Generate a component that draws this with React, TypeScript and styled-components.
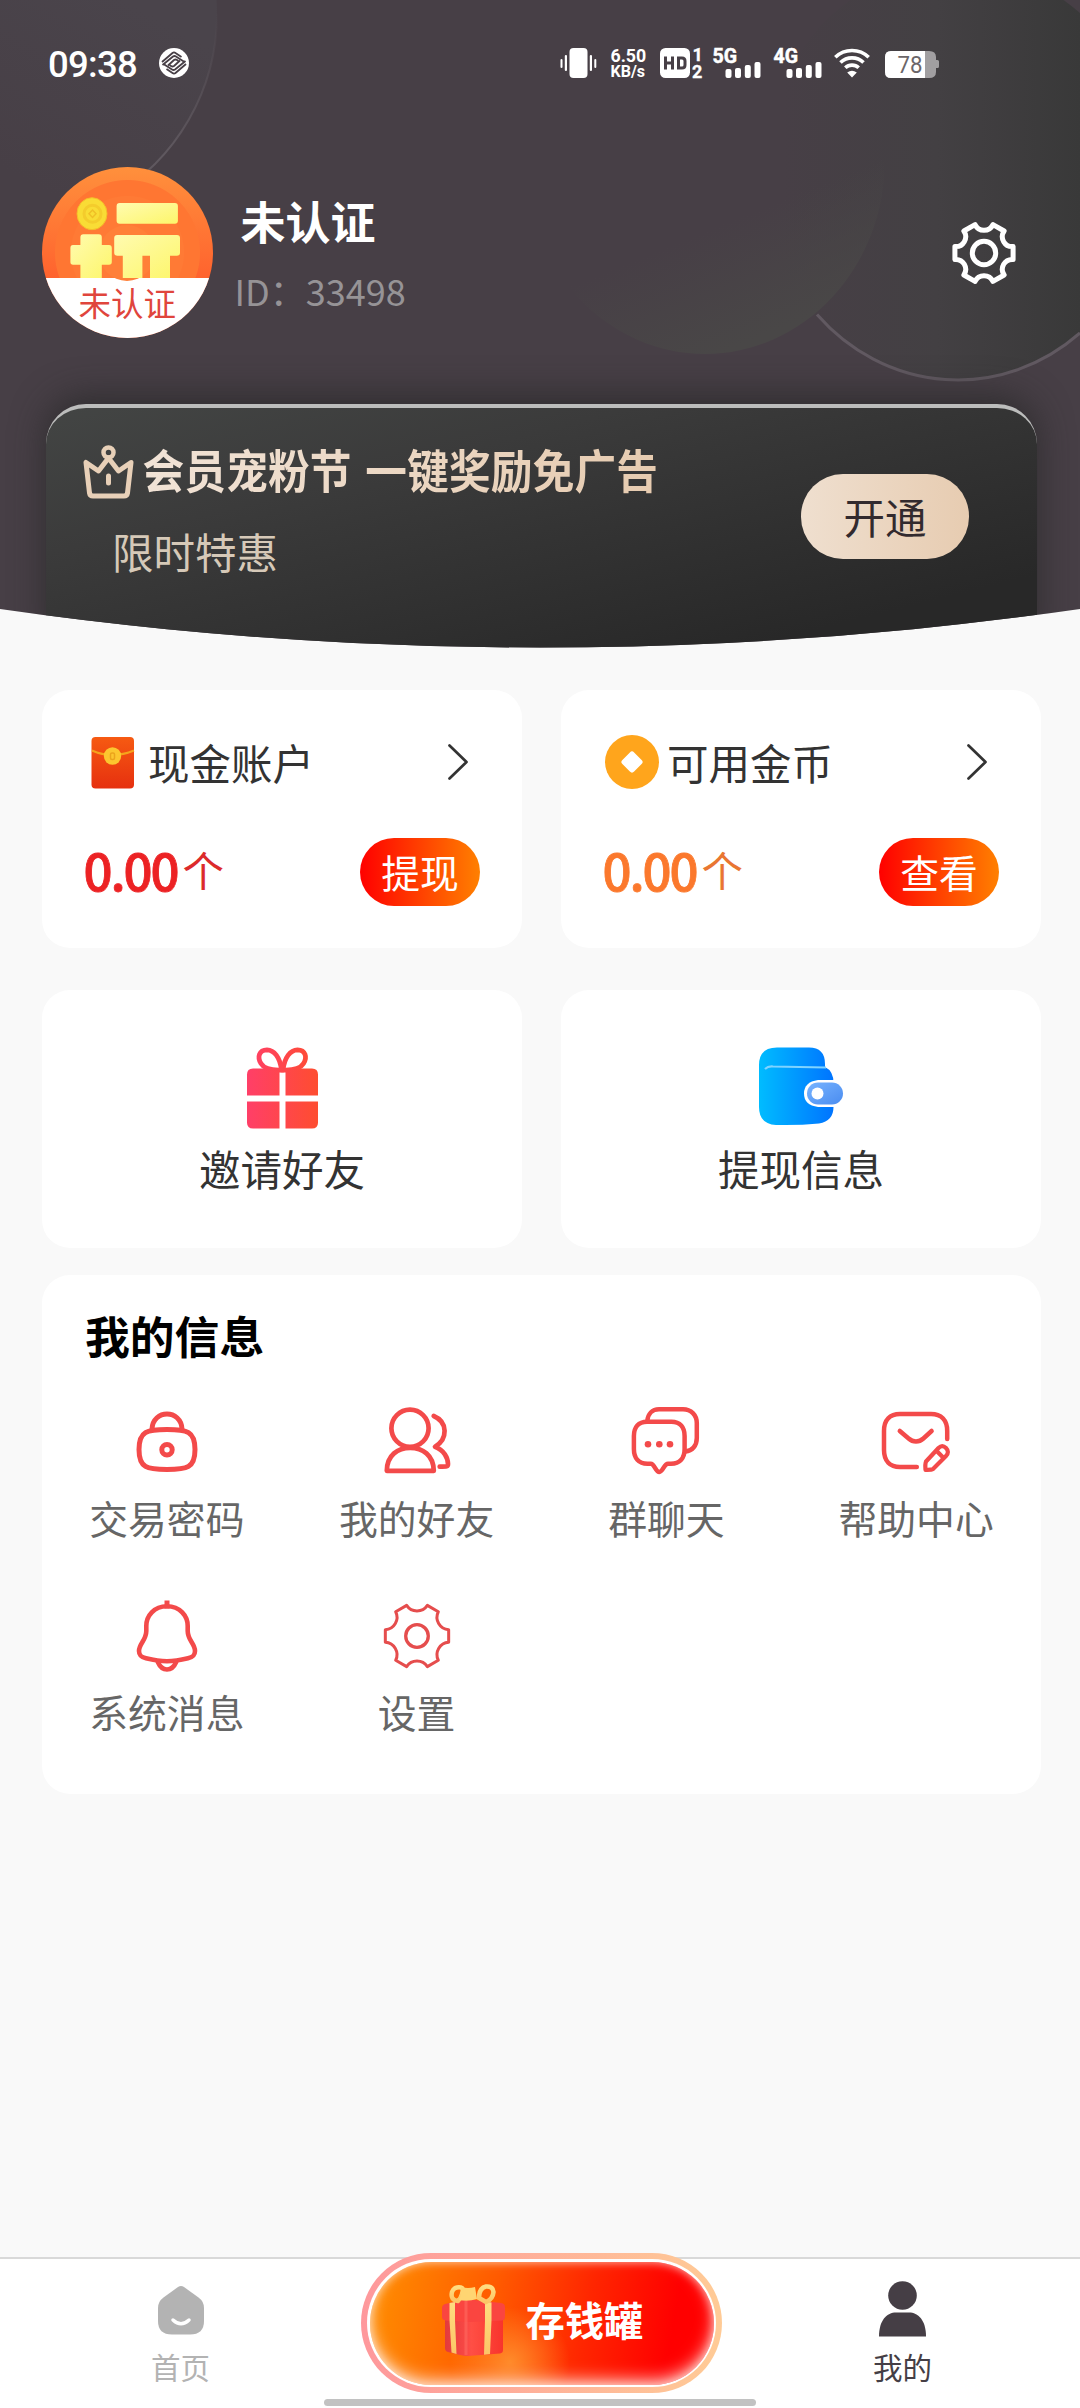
import React from "react";
import styled, { createGlobalStyle, css } from "styled-components";

const CJK = `"Noto Sans CJK SC", "Noto Sans", sans-serif`;
const RED = "#f34a4a";

const GlobalStyle = createGlobalStyle`
  * { box-sizing: border-box; }
  html, body { margin: 0; padding: 0; background: #f9f9f9; }
  body { font-family: ${CJK}; overflow-x: hidden; }
  svg { display: block; flex: none; overflow: visible; }
`;

/* Six-toothed gear outline: straight tooth tips joined by concave valleys. */
function gearPath(c: number, radius: number, halfTooth: number, valley: number) {
  const pt = (deg: number) => {
    const a = (deg * Math.PI) / 180;
    return `${(c + radius * Math.cos(a)).toFixed(2)} ${(c + radius * Math.sin(a)).toFixed(2)}`;
  };
  let d = `M${pt(-halfTooth)}`;
  for (let i = 0; i < 6; i++) {
    const t = i * 60;
    d += ` L${pt(t + halfTooth)} A${valley} ${valley} 0 0 0 ${pt(t + 60 - halfTooth)}`;
  }
  return d + "Z";
}

/* ---------- layout ---------- */

const Screen = styled.div`
  width: 1080px;
  height: 2408px;
  display: flex;
  flex-direction: column;
  background: #f9f9f9;
  overflow: hidden;
`;

const Hero = styled.header`
  position: relative;
  height: 648px;
  flex: none;
  display: flex;
  flex-direction: column;
  background: #473f46;
  clip-path: circle(3806px at 540px -3158.5px);
`;

const HeroArt = styled.svg`
  position: absolute;
  left: 0;
  top: 0;
`;

const StatusBar = styled.div`
  position: relative;
  display: flex;
  align-items: center;
  height: 30px;
  margin-top: 48px;
  padding-left: 48px;
  color: #fff;
  font-family: Roboto, sans-serif;
`;

const Clock = styled.span`
  width: 111px;
  font-size: 36.5px;
  line-height: 30px;
  font-weight: 500;
  letter-spacing: -0.7px;
  padding-top: 3px;
`;

const StatusIcons = styled.div`
  display: flex;
  align-items: center;
  margin-left: 371px;
`;

const NetSpeed = styled.div`
  width: 49px;
  margin-left: 13.5px;
  padding-top: 1px;
  font-size: 17.8px;
  line-height: 15.5px;
  font-weight: 700;
  white-space: nowrap;
  div:last-child { font-size: 16px; }
`;

const Profile = styled.div`
  position: relative;
  display: flex;
  margin: 89px 64px 0 42px;
  height: 171px;
`;

const Avatar = styled.div`
  width: 170.5px;
  height: 171px;
  border-radius: 50%;
  overflow: hidden;
  background: radial-gradient(circle at 50% 50%, #ff7a35 0 56px, #ff7632 57px 72px, transparent 73px),
    linear-gradient(180deg, #ff903c, #ff5f2d 70%);
`;

const AvatarLabel = styled.div`
  height: 60px;
  background: #fff;
  color: #e0453c;
  text-align: center;
  font-size: 32.5px;
  line-height: 47px;
`;

const Who = styled.div`
  flex: 1;
  padding: 24px 0 0 22px;
`;

const Name = styled.div`
  padding-left: 6px;
  color: #fff;
  font-size: 45px;
  font-weight: 700;
  line-height: 60px;
`;

const UserId = styled.div`
  margin-top: 9px;
  color: #969396;
  font-size: 36px;
  line-height: 60px;
`;

const GearButton = styled.div`
  align-self: center;
`;

const MemberCard = styled.section`
  position: relative;
  display: flex;
  margin: 65.5px 43px 0 46px;
  height: 260px;
  padding: 36px 68px 0 37px;
  border-top: 4px solid #bcbdbc;
  border-radius: 40px 40px 0 0;
  background: linear-gradient(166deg, #434544 0%, #3b3b3b 30%, #282828 85%);
  box-shadow: 0 -8px 34px rgba(40, 40, 40, 0.75);
`;

const MemberText = styled.div`
  flex: 1;
`;

const MemberTitle = styled.div`
  display: flex;
  align-items: center;
  height: 56px;
  gap: 8.5px;
  span {
    font-size: 41.7px;
    line-height: 56px;
    margin-top: -7px;
    font-weight: 700;
    white-space: nowrap;
    letter-spacing: 0.15px;
    word-spacing: 4px;
    transform: scaleY(1.1);
    color: transparent;
    background: linear-gradient(90deg, #f1e3d6, #e6cbb0);
    -webkit-background-clip: text;
    background-clip: text;
  }
`;

const MemberSub = styled.div`
  margin-top: 21px;
  padding-left: 29px;
  font-size: 41.5px;
  line-height: 60px;
  color: #d6c9b8;
`;

const OpenButton = styled.button`
  margin-top: 30px;
  width: 168px;
  height: 85px;
  border: 0;
  padding: 0;
  border-radius: 42px;
  font: 41.5px/84px ${CJK};
  color: #322a2e;
  background: linear-gradient(90deg, #efdfcf, #e7ccb1);
`;

const Body = styled.main`
  flex: 1;
  padding: 42px 39px 0 42px;
`;

const CardGrid = styled.div`
  display: grid;
  grid-template-columns: 480px 480px;
  gap: 42px 39px;
`;

const panel = css`
  background: #fff;
  border-radius: 28px;
`;

const BalanceCard = styled.section`
  ${panel}
  height: 258px;
  padding: 42px 42px 42px 44px;
  display: flex;
  flex-direction: column;
  justify-content: space-between;
`;

const Row = styled.div`
  display: flex;
  align-items: center;
  justify-content: space-between;
`;

const CardTitle = styled.div`
  display: flex;
  align-items: center;
  height: 60px;
  gap: 8px;
  font-size: 41.5px;
  line-height: 60px;
  color: #333;
`;

const Amount = styled.div<{ $color: string; $unit: string }>`
  display: flex;
  align-items: center;
  height: 68px;
  margin: -6px 0 0 -2.5px;
  color: ${(p) => p.$color};
  strong {
    font-size: 51px;
    font-weight: 500;
    line-height: 68px;
    letter-spacing: -2.1px;
    -webkit-text-stroke: 0.8px ${(p) => p.$color};
  }
  span {
    margin-left: 5px;
    font-size: 41.5px;
    line-height: 68px;
    color: ${(p) => p.$unit};
  }
`;

const Pill = styled.button`
  width: 120px;
  height: 68px;
  border: 0;
  padding: 0 0 2px;
  border-radius: 34px;
  color: #fff;
  font: 38.8px/66px ${CJK};
  background: linear-gradient(90deg, #ff0000, #ff8000);
`;

const ActionCard = styled.section`
  ${panel}
  height: 258px;
  display: flex;
  flex-direction: column;
  align-items: center;
  padding-top: 57px;
  font-size: 41.5px;
  line-height: 60px;
  color: #333;
  svg { margin-bottom: 9px; }
`;

const InfoCard = styled.section`
  ${panel}
  margin-top: 27px;
  height: 519px;
`;

const InfoTitle = styled.h2`
  margin: 0;
  padding: 30px 0 0 43px;
  font-size: 44.8px;
  line-height: 60px;
  font-weight: 700;
  color: #000;
`;

const MenuGrid = styled.div`
  display: grid;
  grid-template-columns: repeat(4, 1fr);
  margin-top: 39px;
  grid-auto-rows: 194px;
`;

const MenuItem = styled.div`
  display: flex;
  flex-direction: column;
  align-items: center;
  color: #666;
  font-size: 38.8px;
  line-height: 60px;
  svg { margin-bottom: 7px; }
`;

const TabBar = styled.nav`
  flex: none;
  height: 151px;
  display: grid;
  grid-template-columns: 361px 361px 361px;
  grid-template-rows: 140px 11px;
  background: #fff;
  border-top: 2px solid #d9d9d9;
`;

const Tab = styled.div<{ $active?: boolean }>`
  display: flex;
  flex-direction: column;
  align-items: center;
  color: ${(p) => (p.$active ? "#453e45" : "#b3b3b3")};
  font-size: 29.5px;
  line-height: 40px;
`;

const TabIcon = styled.div<{ $lift?: number }>`
  height: 78px;
  margin-bottom: 9px;
  padding-bottom: ${(p) => p.$lift ?? 0}px;
  display: flex;
  align-items: flex-end;
`;

const JarButton = styled.div`
  margin-top: -6px;
  width: 361px;
  height: 140px;
  padding: 6px;
  border-radius: 70px;
  background: linear-gradient(90deg, #fe989c, #ffcb96);
`;

const JarRing = styled.div`
  height: 128px;
  padding: 2.5px;
  border-radius: 64px;
  background: #fff;
`;

const JarFill = styled.div`
  height: 123px;
  border-radius: 62px;
  display: flex;
  align-items: center;
  padding: 0 0 5px 72px;
  gap: 20px;
  color: #fff;
  font-size: 39.3px;
  font-weight: 700;
  line-height: 60px;
  background: radial-gradient(ellipse 60px 55px at 140px 100px, rgba(255, 150, 50, 0.85), transparent),
    linear-gradient(100deg, #ff8a00 4%, #ff5a00 36%, #ff2600 62%, #ff0000 86%);
  box-shadow: inset 0 -6px 16px rgba(255, 235, 225, 0.75), inset 0 0 8px rgba(255, 235, 225, 0.6);
  span { margin-top: -4px; }
`;

const HomeIndicator = styled.div`
  grid-column: 1 / -1;
  width: 432px;
  height: 7px;
  margin-left: 324px;
  border-radius: 4px;
  background: #c2c2c2;
`;

/* ---------- drawings ---------- */

const Backdrop = () => (
  <HeroArt width="1080" height="648" viewBox="0 0 1080 648" fill="none">
    <defs>
      <linearGradient id="bgR" x1="0" y1="0" x2="1" y2="0">
        <stop offset="0.05" stopColor="#473f46" />
        <stop offset="0.45" stopColor="#434043" />
        <stop offset="0.82" stopColor="#393939" />
      </linearGradient>
      <linearGradient id="bgM" gradientUnits="userSpaceOnUse" x1="745" y1="215" x2="790" y2="325">
        <stop offset="0" stopColor="#494747" stopOpacity="0" />
        <stop offset="1" stopColor="#494747" />
      </linearGradient>
      <linearGradient id="bgL" gradientUnits="userSpaceOnUse" x1="60" y1="200" x2="160" y2="20">
        <stop offset="0" stopColor="#4a444b" stopOpacity="0" />
        <stop offset="1" stopColor="#4a444b" />
      </linearGradient>
      <linearGradient id="lnL" gradientUnits="userSpaceOnUse" x1="0" y1="10" x2="0" y2="150">
        <stop offset="0" stopColor="#5c555c" stopOpacity="0" />
        <stop offset="1" stopColor="#5f585f" />
      </linearGradient>
    </defs>
    <ellipse cx="5" cy="14" rx="212" ry="212" fill="url(#bgL)" />
    <path d="M217 14A212 212 0 0 1 111 197.600" stroke="url(#lnL)" strokeWidth="2" />
    <ellipse cx="957" cy="173" rx="193" ry="207.500" fill="url(#bgR)" />
    <path d="M817 314.500A193 207.500 0 0 0 1080 333" stroke="#615961" strokeWidth="3" />
    <ellipse cx="705" cy="160" rx="180" ry="194" fill="url(#bgM)" />
  </HeroArt>
);

const CarrierLogo = () => (
  <svg width="30" height="30" viewBox="0 0 30 30">
    <circle cx="15" cy="15" r="15" fill="#fff" />
    <g fill="none" stroke="#473f46" strokeWidth="1.800" strokeLinejoin="round">
      <path d="M3 14L13.500 5q1.500-1.200 3 0l6 4" />
      <path d="M3.500 17L14 8.500q1.500-1 3 0l8.500 5.500" />
      <path d="M9 17.500L15 12q1.500-1 3 0l1.500 1" />
      <path d="M27 16L16.500 25q-1.500 1.200-3 0l-6-4" />
      <path d="M26.500 13L16 21.500q-1.500 1-3 0l-8.500-5.500" />
      <path d="M21 12.500L15 18q-1.500 1-3 0l-1.500-1" />
    </g>
  </svg>
);

const Vibrate = () => (
  <svg width="37" height="30" viewBox="0 0 37 30" fill="#fff">
    <rect x="9.500" y="0" width="18" height="30" rx="4" />
    <rect x="0.500" y="11" width="2" height="9" rx="1" />
    <rect x="4.800" y="7" width="2.200" height="16" rx="1" />
    <rect x="29.800" y="7" width="2.200" height="16" rx="1" />
    <rect x="34.300" y="11" width="2" height="9" rx="1" />
  </svg>
);

const HdBadge = () => (
  <svg width="43" height="30" viewBox="0 0 43 30">
    <rect width="30" height="30" rx="5.500" fill="#fff" />
    <g fill="none" stroke="#473f46" strokeWidth="3">
      <path d="M5.500 8.500V21.500M12.500 8.500V21.500M5.500 15H12.500" />
      <path d="M18.500 10V20H22Q25 20 25 17V13Q25 10 22 10Z" />
    </g>
    <g fill="#fff" stroke="#fff" strokeWidth="0.300" fontFamily="Roboto, sans-serif" fontWeight="700" fontSize="18">
      <text x="32.500" y="12.500">1</text>
      <text x="32" y="30">2</text>
    </g>
  </svg>
);

const Signal = ({ label }: { label: string }) => (
  <svg width="48" height="30" viewBox="0 0 48 30" fill="#fff">
    <text x="-0.500" y="14.500" stroke="#fff" strokeWidth="0.500" fontFamily="Roboto, sans-serif" fontWeight="700" fontSize="20" textLength="24.500" lengthAdjust="spacingAndGlyphs">
      {label}
    </text>
    <rect x="12.500" y="21" width="6" height="9" rx="2" />
    <rect x="22" y="20" width="6" height="10" rx="2" />
    <rect x="31.800" y="17" width="6" height="13" rx="2" />
    <rect x="41.500" y="14" width="6" height="16" rx="2" />
  </svg>
);

const Wifi = () => (
  <svg width="36" height="30" viewBox="0 0 36 30" fill="none" stroke="#fff" strokeWidth="3.600">
    <path d="M1.300 9.300A24 24 0 0 1 34.700 9.300" />
    <path d="M6.500 14.500A16.500 16.500 0 0 1 29.500 14.500" />
    <path d="M11.300 19.800A9.600 9.600 0 0 1 24.700 19.800" />
    <path d="M13.200 24.600Q18 20.800 22.800 24.600L18 29.500Z" fill="#fff" stroke="none" />
  </svg>
);

const Battery = () => (
  <svg width="54" height="30" viewBox="0 0 54 30">
    <path d="M6 3H44Q51 3 51 9V12H52.500Q54 12 54 13.500V18.500Q54 20 52.500 20H51V24Q51 30 44 30H6Q0 30 0 24V9Q0 3 6 3Z" fill="#a19fa1" />
    <path d="M6 3H40V30H6Q0 30 0 24V9Q0 3 6 3Z" fill="#fff" />
    <text x="12.500" y="24.800" fontFamily="Roboto, sans-serif" fontSize="23" fill="#6b6669" textLength="25" lengthAdjust="spacingAndGlyphs">78</text>
  </svg>
);

const AvatarArt = () => (
  <svg width="170.500" height="111" viewBox="0 0 170.500 111">
    <defs>
      <linearGradient id="yl" x1="0" y1="0" x2="1" y2="1">
        <stop offset="0" stopColor="#fffbb0" />
        <stop offset="1" stopColor="#fdf66a" />
      </linearGradient>
    </defs>
    <circle cx="85" cy="86" r="28" fill="#ff8038" />
    <ellipse cx="50" cy="46.700" rx="15" ry="16" fill="#f9dc35" stroke="#f4bd2a" strokeWidth="1" />
    <circle cx="50.500" cy="46.700" r="8.500" fill="none" stroke="#f4cc2c" strokeWidth="3" />
    <path d="M50.500 43L54 46.700L50.500 50.500L47 46.700Z" fill="none" stroke="#f0c026" strokeWidth="1.500" />
    <g fill="url(#yl)">
      <rect x="74.600" y="36" width="61.300" height="20.700" rx="3" />
      <path d="M41.400 67.300H56.800Q59.800 67.300 59.800 70.300V78H67Q69.800 78 69.800 81V95Q69.800 97.700 67 97.700H59.800V111H38.400V97.700H31Q28.400 97.700 28.400 95V81Q28.400 78 31 78H38.400V70.300Q38.400 67.300 41.400 67.300Z" />
      <path d="M75.200 68H135Q138 68 138 71V85.700Q138 88.700 135 88.700H128V111H108V88.700H100.400V111H80.800V88.700H75.200Q72.200 88.700 72.200 85.700V71Q72.200 68 75.200 68Z" />
    </g>
  </svg>
);

const WhiteGear = () => (
  <svg width="64" height="64" viewBox="0 0 64 64" fill="none" stroke="#fff" strokeWidth="5" strokeLinejoin="round">
    <path d={gearPath(32, 29.8, 12.5, 9.9)} />
    <circle cx="32" cy="32" r="11.700" />
  </svg>
);

const Crown = () => (
  <svg width="51" height="54" viewBox="0 0 51 54" fill="none" stroke="#e8d0b8" strokeWidth="5" strokeLinejoin="round" strokeLinecap="round">
    <circle cx="25.500" cy="7.500" r="5" strokeWidth="4.500" />
    <path d="M3 17.500L6.500 48Q7 51 10 51H41Q44 51 44.500 48L48 17.500L35.500 26L25.500 13L15.500 26Z" />
    <path d="M25.500 31V38" strokeWidth="5" />
  </svg>
);

const Envelope = () => (
  <svg width="54" height="54" viewBox="0 0 54 54">
    <defs>
      <linearGradient id="env" x1="0" y1="0" x2="0" y2="1">
        <stop offset="0" stopColor="#f65a12" />
        <stop offset="1" stopColor="#e6300f" />
      </linearGradient>
    </defs>
    <rect x="5.500" y="2" width="42.500" height="51.500" rx="4" fill="url(#env)" />
    <path d="M6 15.500Q16 20 26.500 20T48 15.500" fill="none" stroke="#f5a41c" strokeWidth="2" />
    <circle cx="26.500" cy="21" r="8.700" fill="#fcc62f" />
    <rect x="24.500" y="18" width="4" height="6.500" rx="1.500" fill="none" stroke="#eba41c" strokeWidth="1.500" />
  </svg>
);

const Coin = () => (
  <svg width="54" height="54" viewBox="0 0 54 54">
    <circle cx="27" cy="27" r="27" fill="#ffa51c" />
    <rect x="18.700" y="18.700" width="16.600" height="16.600" rx="3" fill="#fff" transform="rotate(45 27 27)" />
  </svg>
);

const Chevron = () => (
  <svg width="32" height="36" viewBox="0 0 32 36" fill="none" stroke="#333" strokeWidth="2.700" strokeLinecap="round" strokeLinejoin="round">
    <path d="M1.500 1.500L18.500 18L1.500 34.500" />
  </svg>
);

const GiftIcon = () => (
  <svg width="71" height="82" viewBox="0 0 71 82">
    <defs>
      <linearGradient id="gift" gradientUnits="userSpaceOnUse" x1="0" y1="0" x2="71" y2="0">
        <stop offset="0" stopColor="#ff3f68" />
        <stop offset="1" stopColor="#fe4d30" />
      </linearGradient>
    </defs>
    <g fill="none" stroke="url(#gift)" strokeWidth="4.800">
      <path d="M34.500 23C33 10 27 3 20 2.800C12 3 10 10 14 16.500C17 21.500 23 23.500 34.500 23Z" />
      <path d="M36 23C37.500 10 43.500 3 50.500 2.800C58.500 3 60.500 10 56.500 16.500C53.500 21.500 47.500 23.500 36 23Z" />
    </g>
    <g fill="url(#gift)">
      <path d="M6 21.500H32.500V48.500H0V27.500Q0 21.500 6 21.500Z" />
      <path d="M38.500 21.500H65Q71 21.500 71 27.500V48.500H38.500Z" />
      <path d="M0 54.500H32.500V81.500H6Q0 81.500 0 75.500Z" />
      <path d="M38.500 54.500H71V75.500Q71 81.500 65 81.500H38.500Z" />
    </g>
  </svg>
);

const WalletIcon = () => (
  <svg width="84" height="82" viewBox="0 0 84 82">
    <defs>
      <linearGradient id="wal" x1="0" y1="0" x2="1" y2="0">
        <stop offset="0" stopColor="#00bcff" />
        <stop offset="1" stopColor="#0074ff" />
      </linearGradient>
      <linearGradient id="clasp" x1="0" y1="0" x2="1" y2="1">
        <stop offset="0" stopColor="#78b4ff" />
        <stop offset="1" stopColor="#4a8cf0" />
      </linearGradient>
    </defs>
    <path d="M18 0.500H50Q66 0.500 66 17V20Q74.500 24 74.500 36V60Q74.500 74 60 76.500Q40 78.500 17 78Q0 77 0 60V18Q0 0.500 18 0.500Z" fill="url(#wal)" />
    <path d="M6 22Q9 19 14 19.500L67 20.500" fill="none" stroke="#7fd3ff" strokeWidth="2.200" />
    <path d="M76 33H59Q45 35 45 46.500T59 60H76Z" fill="#fff" />
    <rect x="48" y="35.500" width="36" height="22" rx="11" fill="url(#clasp)" />
    <circle cx="58.500" cy="46.500" r="6" fill="#fff" />
  </svg>
);

const LineIcon = ({ children, w = 4.6 }: { children: React.ReactNode; w?: number }) => (
  <svg width="76" height="76" viewBox="0 0 76 76" fill="none" stroke={RED} strokeWidth={w} strokeLinecap="round" strokeLinejoin="round">
    {children}
  </svg>
);

const menu = [
  {
    label: "交易密码",
    icon: (
      <LineIcon w={5}>
        <path d="M38 25.500C58 25.500 66 27 66 45.500S58 65.500 38 65.500S10 64 10 45.500S18 25.500 38 25.500Z" />
        <path d="M23 25C24 5 52 5 53 25" />
        <circle cx="38" cy="45.700" r="5.200" />
      </LineIcon>
    ),
  },
  {
    label: "我的好友",
    icon: (
      <LineIcon w={4.7}>
        <circle cx="31" cy="24.300" r="18.600" />
        <path d="M7.800 66.800C8 51 19 43.800 31.200 43.800S54.500 51 54.800 66.800Z" />
        <path d="M54.700 12C69 18 69 35 56 42.700C65 46 69 54 69 60C69 62.700 68 62.700 60.700 62.700" />
      </LineIcon>
    ),
  },
  {
    label: "群聊天",
    icon: (
      <LineIcon w={4.5}>
        <path d="M19 17.700H43.500C52 17.700 56.600 23 56.600 32V45C56.600 54 52 59.700 43 59.700H40C36 59.700 35 68 31.300 68S26.500 59.700 22.800 59.700H19.500C10.500 59.700 5.900 54 5.900 45V32C5.900 23 10.500 17.700 19 17.700Z" />
        <path d="M19.400 16.500C20 10 24 5.300 31 5.300H55C63 5.300 68.800 11 68.800 19.300V34C68.800 42 64 47 57.600 47.500" />
        <g fill={RED} stroke="none">
          <circle cx="20" cy="40.300" r="3.300" />
          <circle cx="31.300" cy="40.300" r="3.300" />
          <circle cx="42" cy="40.300" r="3.300" />
        </g>
      </LineIcon>
    ),
  },
  {
    label: "帮助中心",
    icon: (
      <LineIcon w={4.5}>
        <path d="M69.200 35V27C69.200 16 63 10 53 10H22C12 10 6 16 6 27V46C6 57 12 63 22 63H38.800" />
        <path d="M21.800 27L30.600 34.500C35 38.500 41 38.500 45.400 34.500L53.600 27" />
        <g strokeWidth="4.200">
          <path d="M48 57.500L60.500 44C63 41.500 65.500 41.500 68 44S70.500 49.500 68 52L55 65Q53.500 66 47.500 65.800Q47 60 48 57.500Z" />
          <path d="M58.700 47L65.400 53.800" />
        </g>
      </LineIcon>
    ),
  },
  {
    label: "系统消息",
    icon: (
      <LineIcon w={4.6}>
        <path d="M38 2.500V10.500" strokeWidth="5" strokeLinecap="butt" />
        <path d="M38 8.300C25 8.300 17.300 18 17.300 28V33C17.300 42 10 46 10 53C10 58 13 59.300 17 60.300C24 62 31 63.300 38 63.300S52 62 59 60.300C63 59.300 66 58 66 53C66 46 58.700 42 58.700 33V28C58.700 18 51 8.300 38 8.300Z" />
        <path d="M28.800 64C31 69 34 71.500 38 71.500S45 69 47.200 64" />
      </LineIcon>
    ),
  },
  {
    label: "设置",
    icon: (
      <LineIcon w={3}>
        <path d={gearPath(38, 32.3, 11.3, 12.4)} stroke="#e54d4d" />
        <circle cx="38" cy="38" r="11.300" stroke="#e54d4d" strokeWidth="3.300" />
      </LineIcon>
    ),
  },
];

const HomeIcon = () => (
  <svg width="46" height="49" viewBox="0 0 46 49">
    <path d="M20 1Q23 -0.800 26 1L40.500 11.500Q46 15.500 46 22V35Q46 48.500 32 48.500H14Q0 48.500 0 35V22Q0 15.500 5.500 11.500Z" fill="#b3b3b3" />
    <path d="M15 34Q23 41.500 31 34" fill="none" stroke="#fff" strokeWidth="3.500" strokeLinecap="round" />
  </svg>
);

const PersonIcon = () => (
  <svg width="47" height="56" viewBox="0 0 47 56" fill="#453e45">
    <circle cx="23.500" cy="14.500" r="14.300" />
    <path d="M0 55.500C0 39 8 31.500 17 31.500H30C39 31.500 47 39 47 55.500Z" />
  </svg>
);

const JarGift = () => (
  <svg width="64" height="73" viewBox="0 0 64 73">
    <defs>
      <linearGradient id="jb" x1="0" y1="0" x2="1" y2="0">
        <stop offset="0" stopColor="#e33a3c" />
        <stop offset="0.400" stopColor="#fb4a46" />
        <stop offset="0.450" stopColor="#ff4f45" />
        <stop offset="1" stopColor="#f8342c" />
      </linearGradient>
      <linearGradient id="jr" x1="0" y1="0" x2="0" y2="1">
        <stop offset="0" stopColor="#ffdd80" />
        <stop offset="1" stopColor="#fcc566" />
      </linearGradient>
    </defs>
    <path d="M3 32L24 36L61 32V66Q61 69 58 69.500L26 72Q22 72 18 71L6 68Q3 67 3 64Z" fill="url(#jb)" />
    <path d="M0 24Q0 21 3 20L20 16Q24 15 28 15.500L59 19Q63 19.500 63 23V33Q63 36 60 36.500L28 38Q24 38 20 37.500L4 36.500Q0 36 0 33Z" fill="#fa4540" />
    <path d="M24 17V71" stroke="#ff6a60" strokeWidth="3" opacity="0.6" />
    <path d="M7.500 19L13 18V36L14.500 70L9.500 68.500L7.500 36Z" fill="url(#jr)" />
    <path d="M43 17.500L49.500 18.500V36L48 70L42 70.700L43 36Z" fill="url(#jr)" />
    <g fill="none" stroke="url(#jr)" strokeWidth="4.500">
      <path d="M16 17Q8 16 10 8Q12 2.500 19 3.500Q22 4 20 10Q19 14 16 17Z" />
      <path d="M37 14Q37 4 44 2.500Q51 2 51.500 8Q51 15 44 18Z" />
    </g>
    <path d="M19 3Q26 5 33 3L35 15Q26 18 17 16Q20 10 19 3Z" fill="#ffd572" />
  </svg>
);

/* ---------- page ---------- */

type BalanceProps = {
  icon: React.ReactNode;
  title: string;
  color: string;
  unitColor: string;
  action: string;
};

const Balance = ({ icon, title, color, unitColor, action }: BalanceProps) => (
  <BalanceCard>
    <Row>
      <CardTitle>{icon}{title}</CardTitle>
      <Chevron />
    </Row>
    <Row>
      <Amount $color={color} $unit={unitColor}><strong>0.00</strong><span>个</span></Amount>
      <Pill>{action}</Pill>
    </Row>
  </BalanceCard>
);

const Icon = styled.div<{ $gap: number }>`
  margin-left: ${(p) => p.$gap}px;
`;

export default function App() {
  return (
    <>
      <GlobalStyle />
      <Screen>
        <Hero>
          <Backdrop />
          <StatusBar>
            <Clock>09:38</Clock>
            <CarrierLogo />
            <StatusIcons>
              <Vibrate />
              <NetSpeed><div>6.50</div><div>KB/s</div></NetSpeed>
              <Icon $gap={0}><HdBadge /></Icon>
              <Icon $gap={10.5}><Signal label="5G" /></Icon>
              <Icon $gap={12.5}><Signal label="4G" /></Icon>
              <Icon $gap={12}><Wifi /></Icon>
              <Icon $gap={15}><Battery /></Icon>
            </StatusIcons>
          </StatusBar>
          <Profile>
            <Avatar>
              <AvatarArt />
              <AvatarLabel>未认证</AvatarLabel>
            </Avatar>
            <Who>
              <Name>未认证</Name>
              <UserId>ID：33498</UserId>
            </Who>
            <GearButton><WhiteGear /></GearButton>
          </Profile>
          <MemberCard>
            <MemberText>
              <MemberTitle><Crown /><span>会员宠粉节 一键奖励免广告</span></MemberTitle>
              <MemberSub>限时特惠</MemberSub>
            </MemberText>
            <OpenButton>开通</OpenButton>
          </MemberCard>
        </Hero>

        <Body>
          <CardGrid>
            <Balance icon={<Envelope />} title="现金账户" color="#ec2224" unitColor="#dc2a2c" action="提现" />
            <Balance icon={<Coin />} title="可用金币" color="#fb782c" unitColor="#e97632" action="查看" />
            <ActionCard><GiftIcon />邀请好友</ActionCard>
            <ActionCard><WalletIcon />提现信息</ActionCard>
          </CardGrid>
          <InfoCard>
            <InfoTitle>我的信息</InfoTitle>
            <MenuGrid>
              {menu.map((m) => (
                <MenuItem key={m.label}>{m.icon}{m.label}</MenuItem>
              ))}
            </MenuGrid>
          </InfoCard>
        </Body>

        <TabBar>
          <Tab><TabIcon $lift={2}><HomeIcon /></TabIcon>首页</Tab>
          <JarButton>
            <JarRing>
              <JarFill><JarGift /><span>存钱罐</span></JarFill>
            </JarRing>
          </JarButton>
          <Tab $active><TabIcon><PersonIcon /></TabIcon>我的</Tab>
          <HomeIndicator />
        </TabBar>
      </Screen>
    </>
  );
}
